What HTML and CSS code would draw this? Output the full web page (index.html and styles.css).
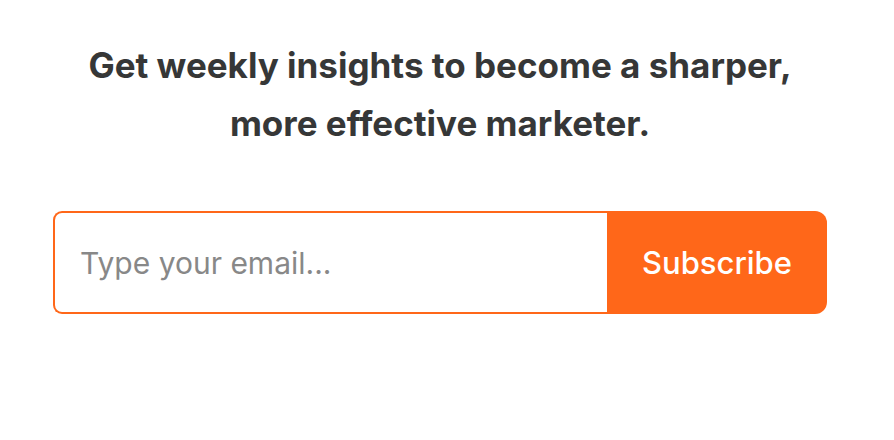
FILE: index.html
```html
<!DOCTYPE html>
<html lang="en">
<head>
<meta charset="utf-8">
<title>Subscribe</title>
<link rel="stylesheet" href="styles.css">
</head>
<body>
<main class="widget">
  <p class="pitch">Get weekly insights to become a sharper, more effective marketer.</p>
  <form class="subscribe">
    <input class="email" type="email" placeholder="Type your email...">
    <button class="btn" type="button">Subscribe</button>
  </form>
</main>
</body>
</html>
```

FILE: styles.css
```css
html, body {
  margin: 0;
  padding: 0;
  background: #ffffff;
}
body {
  width: 880px;
  font-family: Inter, "Noto Sans", sans-serif;
}
.widget {
  width: 774px;
  margin: 0 auto;
  padding-top: 36px;
  display: flex;
  flex-direction: column;
  align-items: stretch;
}
.pitch {
  margin: 0 auto;
  width: 740px;
  text-align: center;
  font-size: 35px;
  font-weight: 700;
  line-height: 58px;
  color: #363737;
}
.subscribe {
  margin-top: 59px;
  display: flex;
  height: 103px;
}
.email {
  flex: 1;
  min-width: 0;
  box-sizing: border-box;
  height: 100%;
  border: 2px solid #ff6719;
  border-right: none;
  border-radius: 9px 0 0 9px;
  padding: 0 0 0 25px;
  font-family: inherit;
  font-size: 30px;
  color: #363737;
  outline: none;
  background: #fff;
}
.email::placeholder {
  color: #888888;
}
.btn {
  width: 220px;
  height: 100%;
  border: none;
  border-radius: 0 12px 12px 0;
  background: #ff6719;
  color: #ffffff;
  font-family: inherit;
  font-size: 31px;
  font-weight: 500;
  padding: 0;
  cursor: pointer;
}
```
